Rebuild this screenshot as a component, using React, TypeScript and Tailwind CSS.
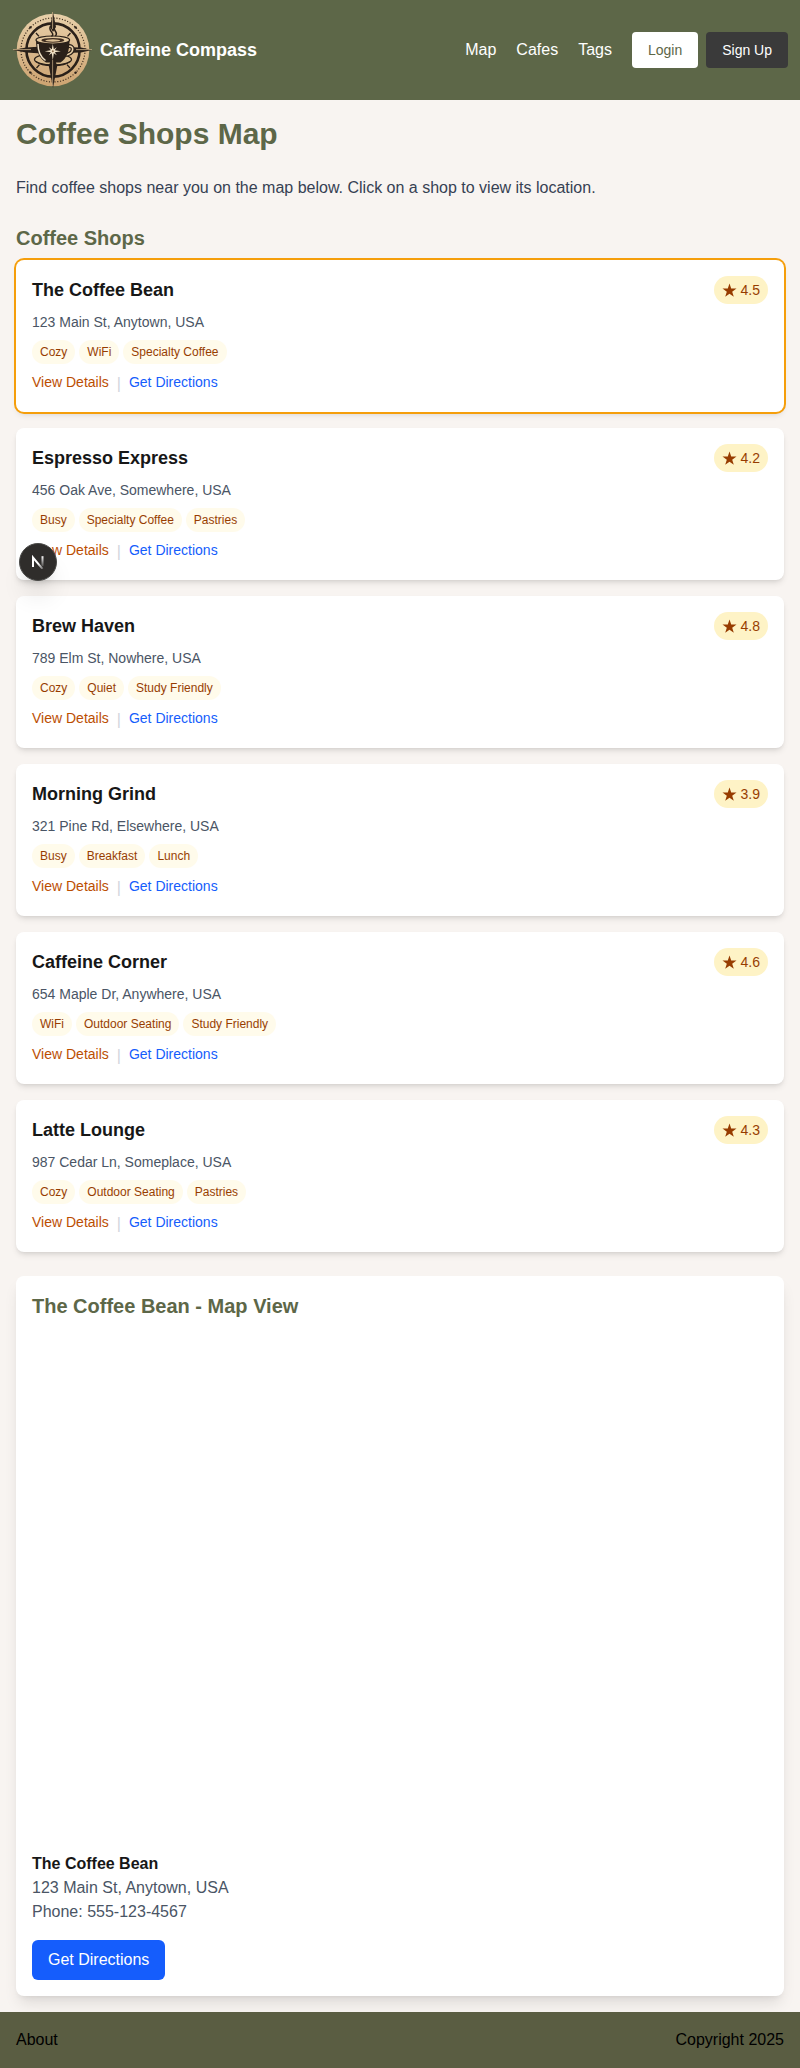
import React from "react";

type Shop = {
  name: string;
  address: string;
  rating: string;
  tags: string[];
};

const shops: Shop[] = [
  { name: "The Coffee Bean", address: "123 Main St, Anytown, USA", rating: "4.5", tags: ["Cozy", "WiFi", "Specialty Coffee"] },
  { name: "Espresso Express", address: "456 Oak Ave, Somewhere, USA", rating: "4.2", tags: ["Busy", "Specialty Coffee", "Pastries"] },
  { name: "Brew Haven", address: "789 Elm St, Nowhere, USA", rating: "4.8", tags: ["Cozy", "Quiet", "Study Friendly"] },
  { name: "Morning Grind", address: "321 Pine Rd, Elsewhere, USA", rating: "3.9", tags: ["Busy", "Breakfast", "Lunch"] },
  { name: "Caffeine Corner", address: "654 Maple Dr, Anywhere, USA", rating: "4.6", tags: ["WiFi", "Outdoor Seating", "Study Friendly"] },
  { name: "Latte Lounge", address: "987 Cedar Ln, Someplace, USA", rating: "4.3", tags: ["Cozy", "Outdoor Seating", "Pastries"] },
];

function Logo() {
  return (
    <svg viewBox="0 0 80 80" className="h-20 w-20" aria-hidden="true">
      <defs>
        <linearGradient id="disc" x1="0" y1="0" x2="0" y2="1">
          <stop offset="0" stopColor="#e8d0aa" />
          <stop offset="1" stopColor="#cda371" />
        </linearGradient>
      </defs>
      <circle cx="41" cy="40" r="36.3" fill="url(#disc)" />
      <circle cx="41" cy="40" r="32" fill="none" stroke="#3a2a1c" strokeWidth="1.2" strokeDasharray="1.1 1.7" />
      <circle cx="41" cy="40" r="26.6" fill="none" stroke="#2a2019" strokeWidth="2.6" />
      <g fill="#2a2019">
        <circle cx="18.4" cy="17.4" r="1.2" />
        <circle cx="63.6" cy="17.4" r="1.2" />
        <circle cx="18.4" cy="62.6" r="1.2" />
        <circle cx="63.6" cy="62.6" r="1.2" />
      </g>
      <path d="M24 23l3 3.4M58.5 23l-3 3.4M24.5 58l3-3.4M58 58l-3-3.4" stroke="#2a2019" strokeWidth="1.3" />
      {/* Compass needles */}
      <path d="M41 2l3 15-3 5-3-5zM1 40l13-2.4 12-.8v6.4l-12-.8zM80 40l-11-2.4-9-.4v5.6l9-.4z" fill="#2a2019" />
      <path d="M40.6 2v17M1 39.6h18M64 39.6h16" stroke="#cdb189" strokeWidth="0.8" />
      {/* Saucer */}
      <ellipse cx="41" cy="49.5" rx="18.5" ry="5.5" fill="#d9bb8d" stroke="#2a2019" strokeWidth="1.3" />
      <path d="M24 51.5c6 5.5 28 5.5 34 0" fill="none" stroke="#2a2019" strokeWidth="1.1" />
      {/* Cup */}
      <path d="M55 36.5c8-2.5 8 8-2.5 8.5" fill="none" stroke="#2a2019" strokeWidth="4" />
      <path d="M55 36.5c8-2.5 8 8-2.5 8.5" fill="none" stroke="#e6cda6" strokeWidth="1.6" />
      <path d="M24 30h33.5c0 11-2.5 18-9 22.500H34C27 48 24 41 24 30z" fill="#2a2019" />
      <path d="M26 34c0 7.500 2.500 13 7.500 16.500" fill="none" stroke="#f0e0c4" strokeWidth="1.5" />
      <ellipse cx="40.800" cy="30" rx="16.800" ry="4" fill="#e3c89e" stroke="#2a2019" strokeWidth="1.2" />
      <ellipse cx="40.800" cy="30.300" rx="11.500" ry="2.400" fill="#3f2d20" />
      <ellipse cx="40.800" cy="30.500" rx="7.500" ry="1.200" fill="#dcc096" />
      <path d="M39.500 26.500c4.500-3.500-4.500-5.500-.8-10.500M43.300 26c4-4-3-5.500-1-9" fill="none" stroke="#2a2019" strokeWidth="1.5" />
      {/* Lower needle, drawn over the saucer */}
      <path d="M41 44l4.200 12L41 78l-4.200-22z" fill="#2a2019" />
      <path d="M40.600 50v26" stroke="#cdb189" strokeWidth="0.7" />
      {/* Compass rose on the cup */}
      <path d="M40.800 34l1 5.200 3-2-2 3 6 1-6 1 2 3-3-2-1 7-1-7-3 2 2-3-6-1 6-1-2-3 3 2z" fill="#f3e4c8" />
      <circle cx="40.800" cy="41.200" r="1" fill="#8a6a48" />
    </svg>
  );
}

function Star() {
  return (
    <svg viewBox="0 0 15 15" className="h-[15px] w-[15px]" fill="currentColor" aria-hidden="true">
      <path d="M7.500 .6l1.700 5h5.300L10.200 8.700l1.600 5.100-4.300-3.100-4.300 3.100 1.600-5.100L.5 5.600h5.300z" />
    </svg>
  );
}

function ShopCard({ shop, selected }: { shop: Shop; selected: boolean }) {
  return (
    <article className={selected ? "rounded-lg bg-white p-4 shadow-md ring-2 ring-[#f59e0b]" : "rounded-lg bg-white p-4 shadow-md"}>
      <div className="flex items-start justify-between">
        <h3 className="text-lg leading-7 font-bold text-[#171717]">{shop.name}</h3>
        <span className="flex items-center gap-1 rounded-full bg-amber-100 px-2 py-1 text-sm text-amber-800">
          <Star />
          {shop.rating}
        </span>
      </div>
      <p className="mt-2 text-sm text-gray-600">{shop.address}</p>
      <ul className="mt-2 flex flex-wrap gap-1">
        {shop.tags.map((tag) => (
          <li key={tag} className="rounded-full bg-amber-50 px-2 py-1 text-xs text-amber-800">
            {tag}
          </li>
        ))}
      </ul>
      <div className="mt-2 flex gap-2">
        <a href="#details" className="text-sm text-amber-700">View Details</a>
        <span className="text-gray-300">|</span>
        <a href="#directions" className="text-sm text-blue-600">Get Directions</a>
      </div>
    </article>
  );
}

export default function App() {
  const current = shops[0];
  return (
    <div className="relative flex min-h-screen flex-col bg-[#f8f4f1] font-['Liberation_Sans',Arial,sans-serif] text-[#171717]">
      <header className="flex items-center justify-between bg-[#5d6748] px-3 py-2.5">
        <a href="#home" className="flex items-center gap-2">
          <Logo />
          <span className="text-lg font-bold text-white">Caffeine Compass</span>
        </a>
        <nav className="flex items-center gap-5 text-white">
          <a href="#map">Map</a>
          <a href="#cafes">Cafes</a>
          <a href="#tags">Tags</a>
          <div className="flex gap-2">
            <button type="button" className="rounded bg-white px-4 py-2 text-sm text-[#5d6748]">Login</button>
            <button type="button" className="rounded bg-[#3a3a3a] px-4 py-2 text-sm text-white">Sign Up</button>
          </div>
        </nav>
      </header>

      <main className="flex-1 p-4">
        <h1 className="mb-6 text-3xl font-bold text-[#5d6748]">Coffee Shops Map</h1>
        <p className="mb-6 text-gray-700">
          Find coffee shops near you on the map below. Click on a shop to view its location.
        </p>
        <section>
          <h2 className="mb-2 text-xl font-bold text-[#5d6748]">Coffee Shops</h2>
          <div className="flex flex-col gap-4">
            {shops.map((shop) => (
              <ShopCard key={shop.name} shop={shop} selected={shop === current} />
            ))}
          </div>
        </section>

        <section className="mt-6 rounded-lg bg-white p-4 shadow-lg">
          <h2 className="text-xl font-bold text-[#5d6748]">{current.name} - Map View</h2>
          <div className="my-4 h-[500px]" />
          <h3 className="font-bold">{current.name}</h3>
          <p className="text-gray-600">{current.address}</p>
          <p className="text-gray-600">Phone: 555-123-4567</p>
          <a href="#directions" className="mt-4 inline-block rounded-md bg-[#155dfc] px-4 py-2 align-top text-white">
            Get Directions
          </a>
        </section>
      </main>

      <footer className="flex items-center justify-between bg-[#5a5d42] p-4 text-black">
        <a href="#about">About</a>
        <p>Copyright 2025</p>
      </footer>

      <button
        type="button"
        aria-label="Open developer tools"
        className="absolute top-[543px] left-[19px] flex h-[38px] w-[38px] items-center justify-center rounded-full border border-[#4a4a48] bg-[#2f2d2b] shadow-xl"
      >
        <svg viewBox="0 0 14 14" className="h-3.5 w-3.5" fill="none" aria-hidden="true">
          <defs>
            <linearGradient id="diag" x1="8" y1="8" x2="12" y2="14" gradientUnits="userSpaceOnUse">
              <stop stopColor="#fff" />
              <stop offset="1" stopColor="#fff" stopOpacity="0.3" />
            </linearGradient>
            <linearGradient id="stem" x1="11" y1="1" x2="11" y2="12" gradientUnits="userSpaceOnUse">
              <stop stopColor="#fff" />
              <stop offset="1" stopColor="#fff" stopOpacity="0.1" />
            </linearGradient>
          </defs>
          <path d="M2 12V2.500L11.500 13.800" stroke="url(#diag)" strokeWidth="2" />
          <path d="M11.500 1.200v10" stroke="url(#stem)" strokeWidth="2" />
        </svg>
      </button>
    </div>
  );
}
